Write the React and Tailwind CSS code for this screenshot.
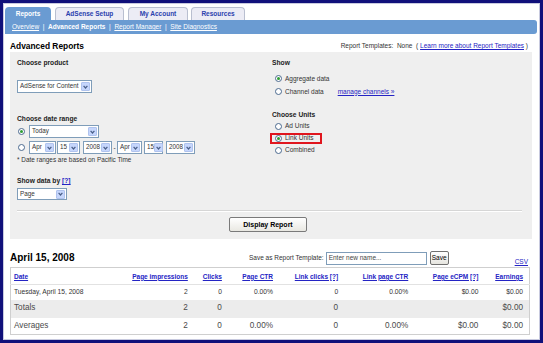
import React from 'react';

// small pieces
function Arrow() {
  return (
    <span className="ml-auto mr-[1px] w-[9px] h-[9px] flex items-center justify-center bg-[#c6d6fc] border border-[#b0c3ee] rounded-[1px] shrink-0">
      <svg width="5" height="4" viewBox="0 0 5 4">
        <path d="M0.6 0.8 L2.5 3 L4.4 0.8" fill="none" stroke="#4a5f88" strokeWidth="1.2" />
      </svg>
    </span>
  );
}

function Select({ value, className = '' }) {
  return (
    <div
      className={`flex items-center bg-white border border-[#7f9db9] pl-[2px] text-[6.3px] text-[#333] leading-none ${className}`}
    >
      <span className="whitespace-nowrap">{value}</span>
      <Arrow />
    </div>
  );
}

function Radio({ checked }) {
  return (
    <span className="w-[7px] h-[7px] rounded-full border border-[#4b6a8f] bg-white flex items-center justify-center shrink-0">
      {checked && <span className="w-[3px] h-[3px] rounded-full bg-[#2e9d34]" />}
    </span>
  );
}

function Label({ children, className = '' }) {
  return (
    <div className={`h-[10px] leading-[10px] font-bold text-[6.7px] text-[#222] ${className}`}>
      {children}
    </div>
  );
}

function Link({ children, bold }) {
  return (
    <span className={`text-[#2424c4] underline ${bold ? 'font-bold' : ''}`}>{children}</span>
  );
}

const columns = [
  { key: 'date', label: 'Date', w: 'w-[109px]' },
  { key: 'imp', label: 'Page impressions', w: 'w-[74px]' },
  { key: 'clicks', label: 'Clicks', w: 'w-[34px]' },
  { key: 'ctr', label: 'Page CTR', w: 'w-[51px]' },
  { key: 'lclicks', label: 'Link clicks [?]', w: 'w-[65px]' },
  { key: 'lctr', label: 'Link page CTR', w: 'w-[70px]' },
  { key: 'ecpm', label: 'Page eCPM [?]', w: 'w-[70px]' },
  { key: 'earn', label: 'Earnings', w: 'w-[45px]' },
];

const rows = [
  {
    cells: ['Tuesday, April 15, 2008', '2', '0', '0.00%', '0', '0.00%', '$0.00', '$0.00'],
    cls: 'h-[15px] text-[6.7px] text-[#333] bg-white',
  },
  {
    cells: ['Totals', '2', '0', '', '0', '', '', '$0.00'],
    cls: 'h-[18px] text-[8.2px] text-[#4a4a4a] bg-[#ececec]',
  },
  {
    cells: ['Averages', '2', '0', '0.00%', '0', '0.00%', '$0.00', '$0.00'],
    cls: 'h-[17px] text-[8.2px] text-[#4a4a4a] bg-white',
  },
];

export default function App() {
  return (
    <div className="w-[543px] h-[343px] overflow-hidden border-[3px] border-[#10107a] bg-white font-['Liberation_Sans',Arial,sans-serif] text-[6.5px] leading-[10px] text-[#333]">
      <div className="h-full border border-[#c8cadf]">
        {/* tabs */}
        <div className="flex items-end h-[13px] mt-[3px] ml-[1px] text-[6.5px] font-bold">
          <div className="w-[46px] h-[13px] flex items-center justify-center bg-[#6a9bd2] text-white rounded-t-[4px]">
            Reports
          </div>
          <div className="ml-[4px] w-[69px] h-[13px] flex items-center justify-center bg-[#ececf5] border border-b-0 border-[#b9bfd0] text-[#2b3fae] rounded-t-[4px]">
            AdSense Setup
          </div>
          <div className="ml-[4px] w-[60px] h-[13px] flex items-center justify-center bg-[#ececf5] border border-b-0 border-[#b9bfd0] text-[#2b3fae] rounded-t-[4px]">
            My Account
          </div>
          <div className="ml-[3px] w-[54px] h-[13px] flex items-center justify-center bg-[#ececf5] border border-b-0 border-[#b9bfd0] text-[#2b3fae] rounded-t-[4px]">
            Resources
          </div>
        </div>

        {/* sub nav */}
        <div className="ml-[1px] w-[532px] h-[14px] bg-[#6a9bd2] rounded-r-[3px] flex items-center pl-[7px] text-white text-[6.5px] whitespace-pre">
          <span className="underline">Overview</span>
          <span>{'  |  '}</span>
          <span className="font-bold">Advanced Reports</span>
          <span>{'  |  '}</span>
          <span className="underline">Report Manager</span>
          <span>{'  |  '}</span>
          <span className="underline">Site Diagnostics</span>
        </div>

        {/* title */}
        <div className="mt-[6px] h-[12px] flex items-center pl-[6px] pr-[11px]">
          <div className="font-bold text-[8.4px] text-black">Advanced Reports</div>
          <div className="ml-auto text-[6.5px] text-[#333] whitespace-pre">
            Report Templates:{'  '}None{'  '}( <Link>Learn more about Report Templates</Link> )
          </div>
        </div>

        {/* options panel */}
        <div className="ml-[6px] w-[522px] h-[187px] bg-[#efefef] flex flex-col">
          <div className="flex">
            {/* left */}
            <div className="w-[262px] pl-[7px] pt-[6px] flex flex-col">
              <Label>Choose product</Label>
              <Select value="AdSense for Content" className="mt-[12px] w-[75px] h-[13px]" />

              <Label className="mt-[21px]">Choose date range</Label>
              <div className="mt-[1px] h-[13px] flex items-center">
                <span className="ml-[1px]"><Radio checked /></span>
                <Select value="Today" className="ml-[4px] w-[70px] h-[13px]" />
              </div>
              <div className="mt-[3px] h-[13px] flex items-center">
                <span className="ml-[1px]"><Radio /></span>
                <Select value="Apr" className="ml-[4px] w-[27px] h-[13px]" />
                <Select value="15" className="ml-[1px] w-[23px] h-[13px]" />
                <Select value="2008" className="ml-[3px] w-[29px] h-[13px]" />
                <span className="w-[5px] text-center">-</span>
                <Select value="Apr" className="w-[25px] h-[13px]" />
                <Select value="15" className="ml-[2px] w-[19px] h-[13px]" />
                <Select value="2008" className="ml-[3px] w-[29px] h-[13px]" />
              </div>
              <div className="mt-[1px] h-[10px] leading-[10px] text-[6.4px] text-[#333]">
                * Date ranges are based on Pacific Time
              </div>

              <Label className="mt-[11px]">
                Show data by <span className="text-[#2424c4] underline">[?]</span>
              </Label>
              <Select value="Page" className="mt-[2px] w-[50px] h-[12px]" />
            </div>

            {/* right */}
            <div className="flex-1 pt-[6px] flex flex-col">
              <Label>Show</Label>
              <div className="mt-[4px] h-[13px] flex items-center">
                <span className="ml-[3px]"><Radio checked /></span>
                <span className="ml-[3px]">Aggregate data</span>
              </div>
              <div className="h-[13px] flex items-center">
                <span className="ml-[3px]"><Radio /></span>
                <span className="ml-[3px]">Channel data</span>
                <span className="ml-[14px]"><Link>manage channels »</Link></span>
              </div>

              <Label className="mt-[12px]">Choose Units</Label>
              <div className="h-[12px] flex items-center">
                <span className="ml-[3px]"><Radio /></span>
                <span className="ml-[3px]">Ad Units</span>
              </div>
              <div className="relative h-[12px] flex items-center">
                <span className="ml-[3px]"><Radio checked /></span>
                <span className="ml-[3px]">Link Units</span>
                <span className="absolute left-[-2px] top-[1px] w-[52px] h-[11px] border-2 border-[#e0161e]" />
              </div>
              <div className="h-[12px] flex items-center">
                <span className="ml-[3px]"><Radio /></span>
                <span className="ml-[3px]">Combined</span>
              </div>
            </div>
          </div>

          <div className="mt-[10px] ml-[7px] mr-[10px] border-t border-[#d6d6d6] border-b border-b-white" />

          <button className="mt-[5px] ml-[219px] w-[78px] h-[15px] flex items-center justify-center border border-[#7a7a7a] rounded-[2px] bg-gradient-to-b from-white to-[#e9e8e2] font-bold text-[7px] text-black">
            Display Report
          </button>
        </div>

        {/* report header */}
        <div className="mt-[11px] ml-[6px] w-[521px] h-[16px] flex items-center">
          <div className="w-[239px] font-bold text-[10px] text-black leading-[16px]">April 15, 2008</div>
          <span className="text-[6.5px] text-[#333]">Save as Report Template:</span>
          <div className="ml-[2px] w-[101px] h-[13px] flex items-center pl-[2px] bg-white border border-[#7f9db9] text-[6.5px] text-[#444]">
            Enter new name...
          </div>
          <button className="ml-[3px] w-[19px] h-[14px] flex items-center justify-center border border-[#707070] rounded-[2px] bg-gradient-to-b from-white to-[#e6e5df] text-[6.5px] text-black">
            Save
          </button>
          <span className="ml-auto mr-[3px] self-end text-[6.5px] leading-[8px]">
            <Link>CSV</Link>
          </span>
        </div>

        {/* table */}
        <table className="mt-[1px] ml-[6px] w-[520px] table-fixed border border-[#cfcfcf]">
          <colgroup>
            {columns.map((c) => (
              <col key={c.key} className={c.w} />
            ))}
          </colgroup>
          <thead>
            <tr className="h-[17px] border-b border-[#e2e2e2] bg-white">
              {columns.map((c, i) => (
                <th
                  key={c.key}
                  className={`p-0 pt-[2px] text-[6.5px] font-bold leading-none whitespace-nowrap ${
                    i === 0 ? 'text-left pl-[3px]' : 'text-right pr-[6px]'
                  }`}
                >
                  <Link bold>{c.label}</Link>
                </th>
              ))}
            </tr>
          </thead>
          <tbody>
            {rows.map((r, ri) => (
              <tr key={ri} className={r.cls}>
                {r.cells.map((v, i) => (
                  <td
                    key={i}
                    className={`p-0 leading-none whitespace-nowrap ${
                      i === 0 ? 'text-left pl-[3px]' : 'text-right pr-[6px]'
                    }`}
                  >
                    {v}
                  </td>
                ))}
              </tr>
            ))}
          </tbody>
        </table>
      </div>
    </div>
  );
}
